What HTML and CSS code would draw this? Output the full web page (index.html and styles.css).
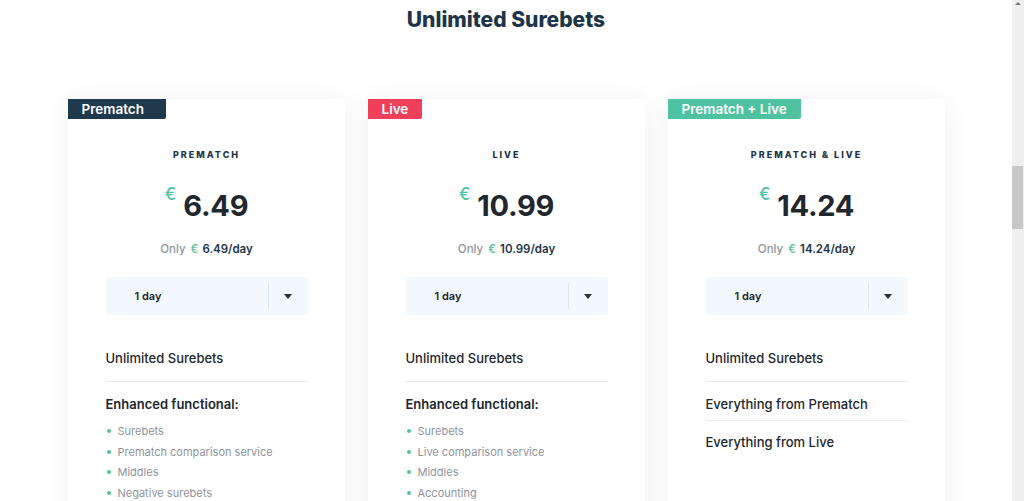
FILE: index.html
```html
<!DOCTYPE html>
<html>
<head>
<meta charset="utf-8">
<link rel="stylesheet" href="styles.css">
</head>
<body>
<div class="page">
  <main class="main">
    <h1 class="title">Unlimited Surebets</h1>
    <div class="cards">
      <section class="card">
        <div class="badge badge-dark">Prematch</div>
        <div class="plan">PREMATCH</div>
        <div class="price"><span class="cur">€</span><span class="amount">6.49</span></div>
        <div class="per">Only <span class="cur-s">€</span> <span class="per-v">6.49/day</span></div>
        <div class="select"><span class="sel-label">1 day</span><span class="sel-arrow"><span class="tri"></span></span></div>
        <div class="feature">Unlimited Surebets</div>
        <div class="feature feature-head">Enhanced functional:</div>
        <ul class="list">
          <li>Surebets</li>
          <li>Prematch comparison service</li>
          <li>Middles</li>
          <li>Negative surebets</li>
        </ul>
      </section>
      <section class="card">
        <div class="badge badge-red">Live</div>
        <div class="plan">LIVE</div>
        <div class="price"><span class="cur">€</span><span class="amount">10.99</span></div>
        <div class="per">Only <span class="cur-s">€</span> <span class="per-v">10.99/day</span></div>
        <div class="select"><span class="sel-label">1 day</span><span class="sel-arrow"><span class="tri"></span></span></div>
        <div class="feature">Unlimited Surebets</div>
        <div class="feature feature-head">Enhanced functional:</div>
        <ul class="list">
          <li>Surebets</li>
          <li>Live comparison service</li>
          <li>Middles</li>
          <li>Accounting</li>
        </ul>
      </section>
      <section class="card">
        <div class="badge badge-green">Prematch + Live</div>
        <div class="plan">PREMATCH &amp; LIVE</div>
        <div class="price"><span class="cur">€</span><span class="amount">14.24</span></div>
        <div class="per">Only <span class="cur-s">€</span> <span class="per-v">14.24/day</span></div>
        <div class="select"><span class="sel-label">1 day</span><span class="sel-arrow"><span class="tri"></span></span></div>
        <div class="feature">Unlimited Surebets</div>
        <div class="feature feature-line">Everything from Prematch</div>
        <div class="feature feature-last">Everything from Live</div>
      </section>
    </div>
  </main>
  <div class="scrollbar">
    <div class="sb-up"></div>
    <div class="sb-thumb"></div>
  </div>
</div>
</body>
</html>
```
FILE: styles.css
```css
html, body {
  margin: 0;
  padding: 0;
  height: 501px;
  overflow: hidden;
  background: #ffffff;
  font-family: "Inter", "Noto Sans", sans-serif;
}
.page {
  display: flex;
  height: 501px;
}
.main {
  flex: 1;
  display: flex;
  flex-direction: column;
  align-items: center;
  overflow: hidden;
}
.title {
  margin: 8px 0 0;
  font-size: 21px;
  line-height: 24px;
  font-weight: 800;
  color: #1d3549;
  letter-spacing: 0;
}
.cards {
  display: flex;
  gap: 23px;
  margin-top: 67px;
}
.card {
  width: 277px;
  height: 460px;
  background: #fff;
  box-shadow: 0 0 28px rgba(0, 0, 0, 0.06);
  border-radius: 3px;
  display: flex;
  flex-direction: column;
  align-items: center;
  padding: 0 37px 0 38px;
  box-sizing: border-box;
  position: relative;
}
.badge {
  align-self: flex-start;
  margin-left: -38px;
  height: 20px;
  line-height: 20px;
  padding: 0 14px;
  color: #fff;
  font-size: 13.5px;
  font-weight: 600;
  border-radius: 0 0 2px 0;
}
.badge-dark { background: #1f3a4d; width: 70px; }
.badge-red { background: #ef3f5b; padding: 0 14px; }
.badge-green { background: #4fc3a1; }
.plan {
  margin-top: 30px;
  font-size: 9px;
  font-weight: 800;
  letter-spacing: 2px;
  color: #1d3549;
  line-height: 11px;
}
.price {
  margin-top: 23px;
  display: flex;
  align-items: flex-start;
  height: 40px;
}
.cur {
  color: #4fc3a1;
  font-size: 17px;
  font-weight: 500;
  margin-right: 7px;
  margin-top: 1px;
  line-height: 20px;
}
.amount {
  font-size: 29px;
  font-weight: 700;
  color: #22262e;
  line-height: 40px;
  margin-top: 3px;
  letter-spacing: -0.3px;
}
.per {
  margin-top: 19px;
  font-size: 11.5px;
  line-height: 14px;
  color: #8f949c;
  font-weight: 500;
  word-spacing: 1px;
}
.cur-s { color: #4fc3a1; margin-left: 1px; }
.per-v { color: #1d3549; font-weight: 600; }
.select {
  margin-top: 21px;
  width: 202px;
  height: 38px;
  background: #f3f8fd;
  display: flex;
  align-items: center;
  border-radius: 2px;
}
.sel-label {
  flex: 1;
  padding-left: 29px;
  font-size: 11px;
  font-weight: 600;
  color: #22262e;
}
.sel-arrow {
  width: 39px;
  height: 26px;
  border-left: 1px solid #dbe7f3;
  display: flex;
  align-items: center;
  justify-content: center;
}
.tri {
  width: 0;
  height: 0;
  border-left: 4px solid transparent;
  border-right: 4px solid transparent;
  border-top: 5px solid #2a2f38;
}
.feature {
  align-self: stretch;
  margin-top: 35px;
  font-size: 13px;
  font-weight: 500;
  color: #22262e;
  line-height: 16px;
  padding-bottom: 15px;
  border-bottom: 1px solid #e6e9ee;
}
.feature-head {
  margin-top: 14px;
  border-bottom: none;
  font-weight: 600;
  padding-bottom: 0;
}
.feature-line {
  margin-top: 14px;
  padding-bottom: 8px;
}
.feature-last {
  margin-top: 13px;
  border-bottom: none;
}
.list {
  align-self: stretch;
  list-style: none;
  margin: 9px 0 0;
  padding: 0;
}
.list li {
  position: relative;
  padding-left: 12px;
  font-size: 11px;
  line-height: 20.5px;
  color: #8f949c;
}
.list li::before {
  content: "";
  position: absolute;
  left: 1px;
  top: 8px;
  width: 4px;
  height: 4px;
  border-radius: 50%;
  background: #4fc3a1;
}
.scrollbar {
  width: 12px;
  background: #f0f0f0;
  position: relative;
  flex: none;
}
.sb-up {
  margin: 2px auto 0;
  width: 0;
  height: 0;
  border-left: 3px solid transparent;
  border-right: 3px solid transparent;
  border-bottom: 3px solid #7a7a7a;
}
.sb-thumb {
  margin: 161px 1px 0 0;
  height: 63px;
  background: #c8c8c8;
}
```
